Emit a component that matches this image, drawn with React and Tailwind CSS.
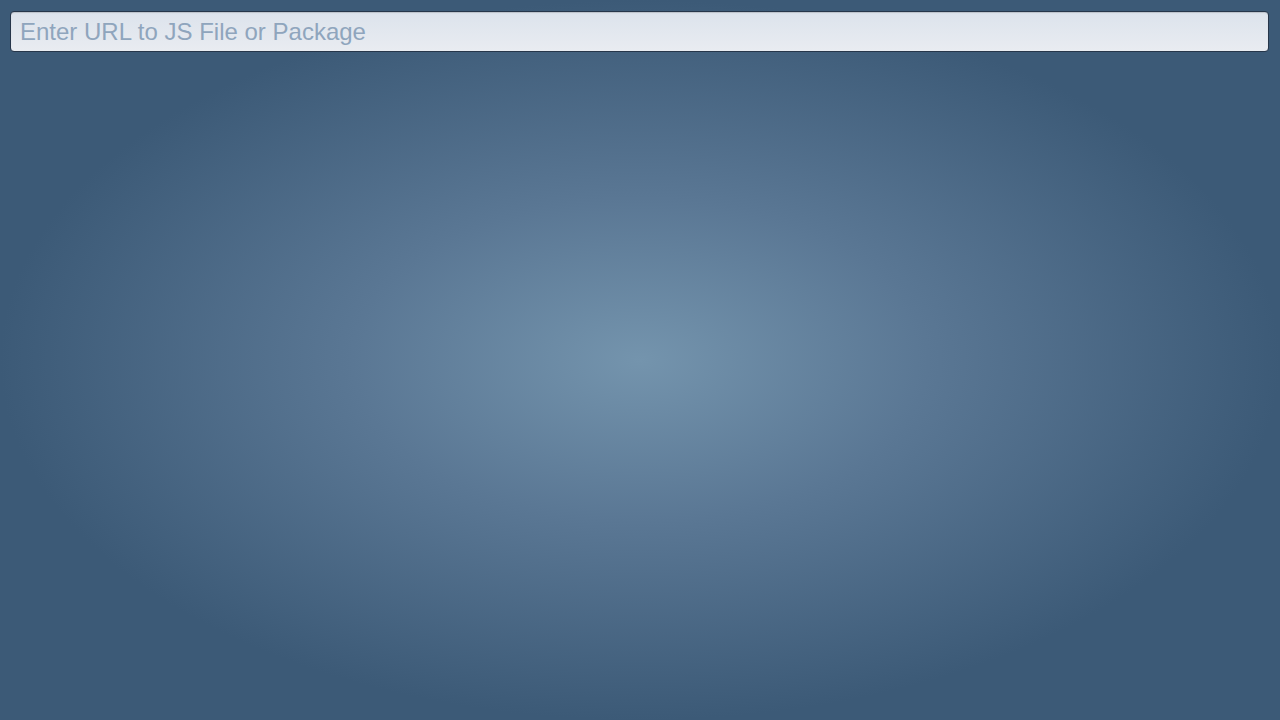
export default function App() {
  return (
    <div className="w-[1280px] h-[720px] overflow-hidden flex flex-col pt-[11px] px-[10px] bg-[radial-gradient(ellipse_640px_360px_at_640px_360px,#7494ad_0%,#5a7794_45%,#3c5a77_100%)]">
      <input
        type="text"
        placeholder="Enter URL to JS File or Package"
        className="block w-[1259px] h-[41px] rounded-[4px] border border-[#26364a] bg-gradient-to-b from-[#dce3ec] to-[#e9ecf1] pl-[9px] pr-[9px] pt-[1px] pb-0 font-['Liberation_Sans',Arial,sans-serif] text-[24px] text-[#334455] placeholder:text-[#8fa5bd] outline-none shadow-[inset_0_1px_1px_rgba(0,0,0,0.15)]"
      />
    </div>
  );
}
